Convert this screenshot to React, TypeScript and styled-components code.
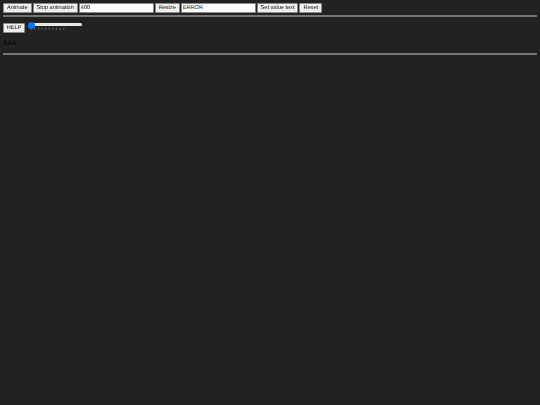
import React from "react";
import styled, { createGlobalStyle } from "styled-components";

const Global = createGlobalStyle`
  html, body { margin: 0; padding: 0; background: #222222; }
  body {
    font-family: "Liberation Sans", Arial, sans-serif;
    text-rendering: geometricPrecision;
  }
`;

const Page = styled.div`
  padding: 3px;
  filter: blur(0.4px);
`;

const Toolbar = styled.div`
  display: flex;
  align-items: center;
  gap: 1px;
  height: 9.5px;
`;

const Button = styled.button`
  box-sizing: border-box;
  height: 9.5px;
  padding: 0.8px 3px 0;
  margin: 0;
  background: #efefef;
  border: 0.5px solid #8a8a8a;
  border-radius: 1px;
  color: #111;
  font: 5.6px "Liberation Sans", Arial, sans-serif;
  text-rendering: geometricPrecision;
  line-height: 7px;
  white-space: nowrap;
`;

const Field = styled.input`
  box-sizing: border-box;
  width: 74.8px;
  height: 9.5px;
  padding: 0 1px;
  margin: 0;
  background: #fff;
  border: 0.5px solid #8a8a8a;
  border-radius: 1px;
  color: #111;
  font: 5.6px "Liberation Sans", Arial, sans-serif;
  text-rendering: geometricPrecision;
`;

const Rule = styled.hr<{ $top: number }>`
  height: 1.7px;
  margin: ${(p) => p.$top}px 0 0;
  padding: 0;
  border: 0;
  background: #747474;
`;

const SliderRow = styled.div`
  display: flex;
  align-items: flex-start;
  gap: 2.5px;
  margin-top: 5px;
  height: 11px;
`;

const HelpButton = styled(Button)`
  width: 22px;
  margin-top: 1.7px;
  padding: 0.8px 0 0;
`;

const Slider = styled.div`
  position: relative;
  width: 54px;
  height: 10px;
`;

const Track = styled.div`
  position: absolute;
  left: 3px;
  top: 1.8px;
  width: 51px;
  height: 3px;
  background: #e8e8e8;
  border-radius: 2px;
`;

const Thumb = styled.div`
  position: absolute;
  left: 0;
  top: 0;
  width: 7px;
  height: 7px;
  border-radius: 50%;
  background: #0075ff;
`;

const Ticks = styled.svg`
  position: absolute;
  left: 0;
  top: 5.5px;
  width: 40px;
  height: 4px;
`;

const Label = styled.div`
  margin-top: 7.5px;
  height: 8px;
  color: #000;
  font-size: 6.5px;
  line-height: 8px;
`;

export default function App() {
  const ticks = Array.from({ length: 10 }, (_, i) => 3 + i * 3.65);
  return (
    <>
      <Global />
      <Page>
        <Toolbar>
          <Button>Animate</Button>
          <Button>Stop animation</Button>
          <Field defaultValue="400" />
          <Button>Resize</Button>
          <Field defaultValue="ERROR" />
          <Button>Set value text</Button>
          <Button>Reset</Button>
        </Toolbar>
        <Rule $top={2.5} />
        <SliderRow>
          <HelpButton>HELP</HelpButton>
          <Slider>
            <Track />
            <Thumb />
            <Ticks viewBox="0 0 40 4">
              {ticks.map((x) => (
                <line key={x} x1={x} x2={x} y1={0.5} y2={3} stroke="#777" strokeWidth={0.7} />
              ))}
            </Ticks>
          </Slider>
        </SliderRow>
        <Label>AAA</Label>
        <Rule $top={4.8} />
      </Page>
    </>
  );
}
